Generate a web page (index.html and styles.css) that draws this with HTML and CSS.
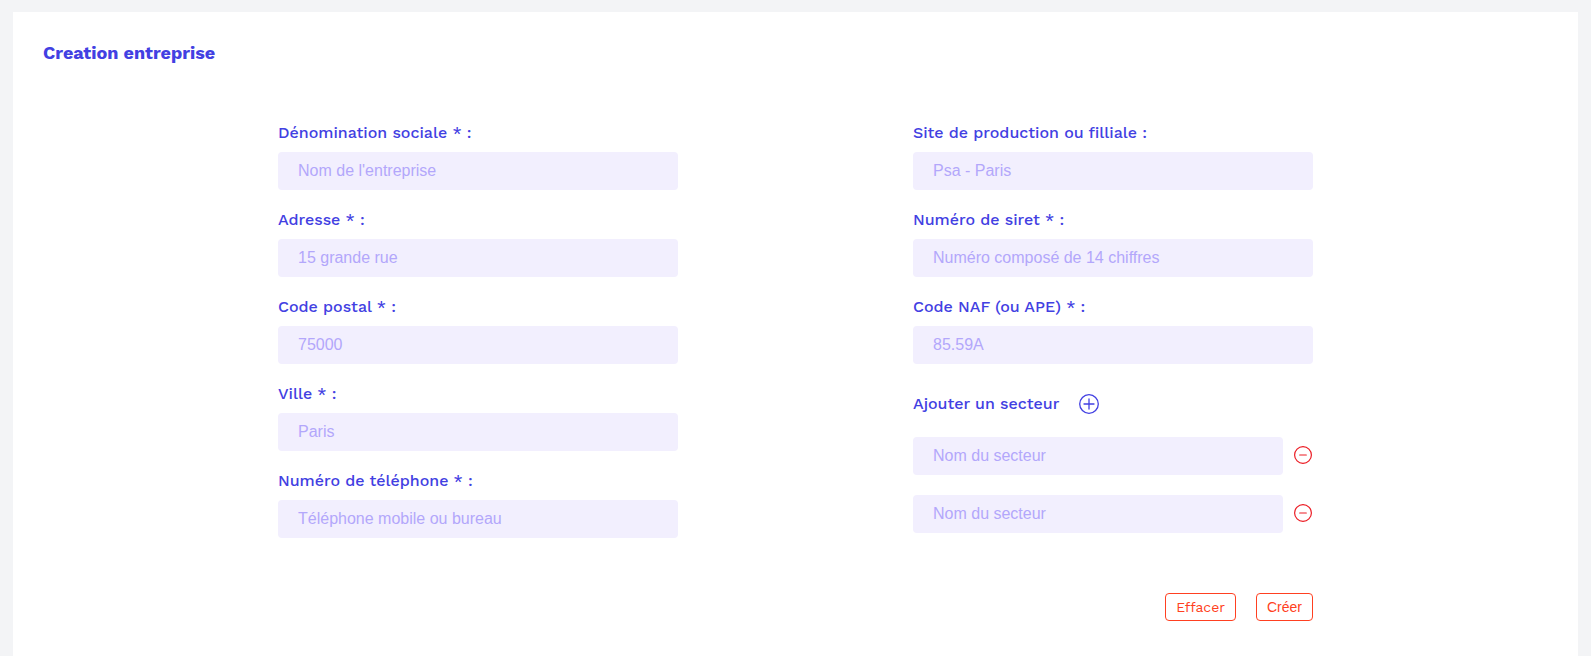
FILE: index.html
```
<!DOCTYPE html>
<html lang="fr">
<head>
<meta charset="utf-8">
<meta name="viewport" content="width=device-width, initial-scale=1">
<title>Creation entreprise</title>
<link rel="stylesheet" href="styles.css">
</head>
<body>
<main class="card">
  <h1 class="title">Creation entreprise</h1>
  <form class="form">
    <div class="column">
      <div class="field">
        <label for="name">Dénomination sociale * :</label>
        <input class="input" id="name" type="text" placeholder="Nom de l'entreprise">
      </div>
      <div class="field">
        <label for="address">Adresse * :</label>
        <input class="input" id="address" type="text" placeholder="15 grande rue">
      </div>
      <div class="field">
        <label for="zip">Code postal * :</label>
        <input class="input" id="zip" type="text" placeholder="75000">
      </div>
      <div class="field">
        <label for="city">Ville * :</label>
        <input class="input" id="city" type="text" placeholder="Paris">
      </div>
      <div class="field">
        <label for="phone">Numéro de téléphone * :</label>
        <input class="input" id="phone" type="tel" placeholder="Téléphone mobile ou bureau">
      </div>
    </div>
    <div class="column">
      <div class="field">
        <label for="site">Site de production ou filliale :</label>
        <input class="input" id="site" type="text" placeholder="Psa - Paris">
      </div>
      <div class="field">
        <label for="siret">Numéro de siret * :</label>
        <input class="input" id="siret" type="text" placeholder="Numéro composé de 14 chiffres">
      </div>
      <div class="field">
        <label for="naf">Code NAF (ou APE) * :</label>
        <input class="input" id="naf" type="text" placeholder="85.59A">
      </div>
      <div class="sector-head">
        <span id="sector-label">Ajouter un secteur</span>
        <button class="icon-button add" type="button" aria-labelledby="sector-label">
          <svg width="20" height="20" viewBox="0 0 20 20" fill="none" stroke="currentColor" stroke-width="1.3" stroke-linecap="round"><circle cx="10" cy="10" r="9.3"/><path d="M10 5v10M5 10h10"/></svg>
        </button>
      </div>
      <div class="sector">
        <input class="input" type="text" placeholder="Nom du secteur" aria-labelledby="sector-label">
        <button class="icon-button remove" type="button" aria-label="Supprimer le secteur">
          <svg width="20" height="20" viewBox="0 0 20 20" fill="none" stroke="currentColor" stroke-width="1.2" stroke-linecap="round"><circle cx="10" cy="9" r="8.4"/><path d="M6.7 9h6.6"/></svg>
        </button>
      </div>
      <div class="sector">
        <input class="input" type="text" placeholder="Nom du secteur" aria-labelledby="sector-label">
        <button class="icon-button remove" type="button" aria-label="Supprimer le secteur">
          <svg width="20" height="20" viewBox="0 0 20 20" fill="none" stroke="currentColor" stroke-width="1.2" stroke-linecap="round"><circle cx="10" cy="9" r="8.4"/><path d="M6.7 9h6.6"/></svg>
        </button>
      </div>
    </div>
    <div class="actions">
      <button class="button reset" type="reset">Effacer</button>
      <button class="button" type="submit">Créer</button>
    </div>
  </form>
</main>
</body>
</html>
```
FILE: styles.css
```
* {
  box-sizing: border-box;
}

body {
  display: flex;
  flex-direction: column;
  min-height: 100vh;
  margin: 0;
  padding: 12px 13px 0;
  background: #f3f4f6;
  color: #4240e2;
  font-family: "Work Sans", Inter, "Open Sans", sans-serif;
  font-size: 16px;
  font-weight: 500;
  line-height: 19px;
}

.card {
  flex: 1;
  padding: 30px 30px 34px;
  background: #fff;
}

.title {
  margin: 0 0 60px;
  font-size: 18px;
  font-weight: 700;
  line-height: 21px;
}

.form {
  display: grid;
  grid-template-columns: repeat(2, minmax(0, 400px));
  justify-content: space-evenly;
  row-gap: 55px;
}

.column {
  display: flex;
  flex-direction: column;
  gap: 20px;
}

.field {
  display: flex;
  flex-direction: column;
  gap: 10px;
}

.input {
  width: 100%;
  height: 38px;
  padding: 0 20px;
  border: 0;
  border-radius: 4px;
  background: #f2effe;
  color: #4240e2;
  font-family: "Liberation Sans", Arial, sans-serif;
  font-size: 16px;
}

.input::placeholder {
  color: #b3a7fb;
  opacity: 1;
}

.sector-head {
  display: flex;
  align-items: flex-start;
  gap: 20px;
  padding: 10px 0 3px;
}

.sector {
  display: flex;
  align-items: center;
  gap: 10px;
}

.icon-button {
  display: flex;
  flex: none;
  padding: 0;
  border: 0;
  background: none;
  cursor: pointer;
}

.add {
  color: #4240e2;
}

.remove {
  color: #ec1c24;
}

.actions {
  display: flex;
  grid-column: 2;
  justify-content: flex-end;
  gap: 20px;
}

.button {
  height: 28px;
  padding: 0 10px;
  border: 1px solid #ff4021;
  border-radius: 4px;
  background: #fff;
  color: #ff4021;
  font-family: "Liberation Sans", Arial, sans-serif;
  font-size: 14px;
  cursor: pointer;
}

.reset {
  font-family: "Work Sans", Inter, "Open Sans", sans-serif;
}
```
